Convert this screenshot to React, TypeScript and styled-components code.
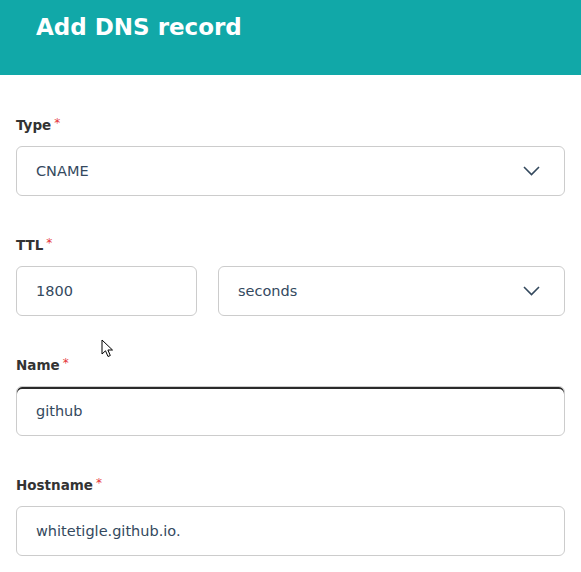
import React from "react";
import styled, { createGlobalStyle } from "styled-components";

const GlobalStyle = createGlobalStyle`
  html, body {
    margin: 0;
    padding: 0;
    background: #ffffff;
    font-family: "DejaVu Sans", "Noto Sans", sans-serif;
  }
  * {
    box-sizing: border-box;
  }
`;

const Page = styled.div`
  position: relative;
  width: 581px;
  min-height: 572px;
  background: #ffffff;
  overflow: hidden;
`;

const Header = styled.header`
  height: 75px;
  background: #11a8a8;
  padding: 12px 0 0 36px;
`;

const Title = styled.h1`
  margin: 0;
  font-size: 23px;
  line-height: 30px;
  font-weight: 700;
  color: #ffffff;
`;

const Body = styled.div`
  display: flex;
  flex-direction: column;
  gap: 39px;
  padding: 40px 16px 0 16px;
`;

const Field = styled.div`
  display: flex;
  flex-direction: column;
  gap: 11px;
`;

const Label = styled.label`
  display: flex;
  align-items: flex-start;
  gap: 3px;
  height: 20px;
  font-size: 13.5px;
  line-height: 20px;
  font-weight: 700;
  color: #333333;
`;

const Required = styled.span`
  color: #e5343a;
  font-size: 12px;
  line-height: 16px;
  font-weight: 400;
`;

const Row = styled.div`
  display: flex;
  gap: 21px;
`;

const Box = styled.div<{ $width?: number; $focused?: boolean }>`
  display: flex;
  align-items: center;
  justify-content: space-between;
  height: 50px;
  flex-shrink: 0;
  ${(p) => (p.$width ? `width: ${p.$width}px;` : "flex-grow: 1;")}
  padding: 0 24px 0 19px;
  border: 1px solid #cccccc;
  border-radius: 6px;
  background: #ffffff;
  box-shadow: ${(p) => (p.$focused ? "inset 0 2px 0 #2a2a2a" : "none")};
`;

const Value = styled.span`
  font-size: 14.5px;
  color: #34495e;
`;

const Chevron = () => (
  <svg width="17" height="10" viewBox="0 0 17 10" fill="none">
    <path d="M1 1 L8.5 8.5 L16 1" stroke="#34495e" strokeWidth="1.6" />
  </svg>
);

const Pointer = styled.svg`
  position: absolute;
  left: 101px;
  top: 339px;
`;

const Select = ({ value, width }: { value: string; width?: number }) => (
  <Box $width={width}>
    <Value>{value}</Value>
    <Chevron />
  </Box>
);

export default function App() {
  return (
    <Page>
      <GlobalStyle />
      <Header>
        <Title>Add DNS record</Title>
      </Header>
      <Body>
        <Field>
          <Label>
            Type<Required>*</Required>
          </Label>
          <Select value="CNAME" />
        </Field>
        <Field>
          <Label>
            TTL<Required>*</Required>
          </Label>
          <Row>
            <Box $width={181}>
              <Value>1800</Value>
            </Box>
            <Select value="seconds" />
          </Row>
        </Field>
        <Field>
          <Label>
            Name<Required>*</Required>
          </Label>
          <Box $focused>
            <Value>github</Value>
          </Box>
        </Field>
        <Field>
          <Label>
            Hostname<Required>*</Required>
          </Label>
          <Box>
            <Value>whitetigle.github.io.</Value>
          </Box>
        </Field>
      </Body>
      <Pointer width="14" height="20" viewBox="0 0 14 20">
        <path
          d="M1 1 L1 15 L4.5 11.8 L7 17.5 L9.3 16.5 L6.9 11 L11.5 11 Z"
          fill="#ffffff"
          stroke="#000000"
          strokeWidth="1"
          strokeLinejoin="miter"
        />
      </Pointer>
    </Page>
  );
}
